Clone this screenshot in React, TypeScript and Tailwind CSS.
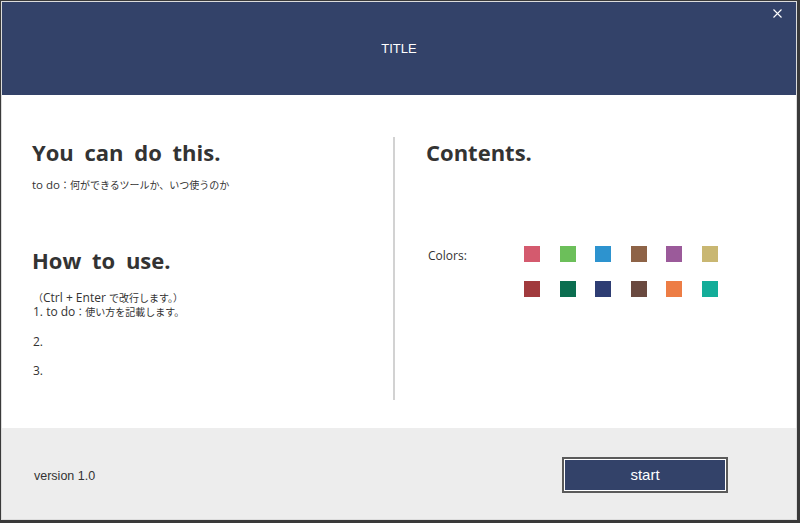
import React from "react";

const row1 = ["#d45a6e", "#6cbf5a", "#2d93cf", "#8e6347", "#9b5a9a", "#c9b772"];
const row2 = ["#a13a3d", "#0b6e50", "#2e3d73", "#6a4a40", "#ed7d45", "#13ad99"];

export default function App() {
  const jp = { fontFamily: '"Open Sans", "Noto Sans CJK JP", sans-serif' };
  const ui = { fontFamily: '"Liberation Sans", "Noto Sans CJK JP", sans-serif' };
  return (
    <div className="w-[800px] h-[523px] bg-[#3a3a3a] pt-px pl-px pr-[3px] pb-[3px] overflow-hidden">
      <div className="w-full h-full border border-[#dcdcdc] flex flex-col bg-white">
        {/* header */}
        <div className="relative h-[93px] bg-[#334269] flex items-center justify-center shrink-0">
          <span className="text-white text-[13px]" style={ui}>TITLE</span>
          <svg className="absolute right-[14px] top-[7px]" width="9" height="9" viewBox="0 0 9 9">
            <path d="M0.5 0.5 L8.5 8.5 M8.5 0.5 L0.5 8.5" stroke="#ffffff" strokeWidth="1.1" />
          </svg>
        </div>
        <div className="h-px bg-white shrink-0" />
        {/* body */}
        <div className="flex-1 flex pt-[41px] pb-[28px] text-[#333]" style={jp}>
          <div className="w-[391px] pl-[30px] flex flex-col">
            <h1 className="text-[22px] font-bold leading-[30px] [word-spacing:5px]">You can do this.</h1>
            <p className="mt-[10px] text-[11.5px] leading-[16px]">
              to do<span className="text-[10px]">：何ができるツールか、いつ使うのか</span>
            </p>
            <h1 className="mt-[52px] text-[22px] font-bold leading-[30px] [word-spacing:5px]">How to use.</h1>
            <div className="mt-[16px] text-[12px] leading-[14px] pl-px">
              <div className="leading-[14px]">
                <span className="text-[10px] leading-[14px]">（</span>Ctrl + Enter <span className="text-[10px] leading-[14px]">で改行します。）</span>
              </div>
              <div className="leading-[14px]">
                1. to do<span className="text-[10px] leading-[14px]">：使い方を記載します。</span>
              </div>
              <div className="mt-[16px]">2.</div>
              <div className="mt-[15px]">3.</div>
            </div>
          </div>
          <div className="w-[2px] bg-[#d2d2d2]" />
          <div className="flex-1 pl-[31px] flex flex-col">
            <h1 className="text-[22px] font-bold leading-[30px]">Contents.</h1>
            <div className="mt-[79px] flex">
              <div className="w-[98px] pl-[2px] text-[12px] leading-[18px] mt-[1px]">Colors:</div>
              <div className="grid grid-cols-[repeat(6,16px)] gap-x-[19.6px] gap-y-[19px]">
                {row1.concat(row2).map((c, i) => (
                  <div key={i} className="w-4 h-4" style={{ backgroundColor: c }} />
                ))}
              </div>
            </div>
          </div>
        </div>
        {/* footer */}
        <div className="h-[91px] bg-[#ededed] flex items-center justify-between pl-[32px] pr-[68px] shrink-0">
          <span className="text-[12.5px] text-[#333] mt-[6px]" style={ui}>version 1.0</span>
          <button className="w-[166px] h-[36px] mt-[3px] bg-[#334269] border-2 border-[#5a5a5a] shadow-[inset_0_0_0_1px_#ffffff] text-white text-[15px]" style={ui}>
            start
          </button>
        </div>
      </div>
    </div>
  );
}
